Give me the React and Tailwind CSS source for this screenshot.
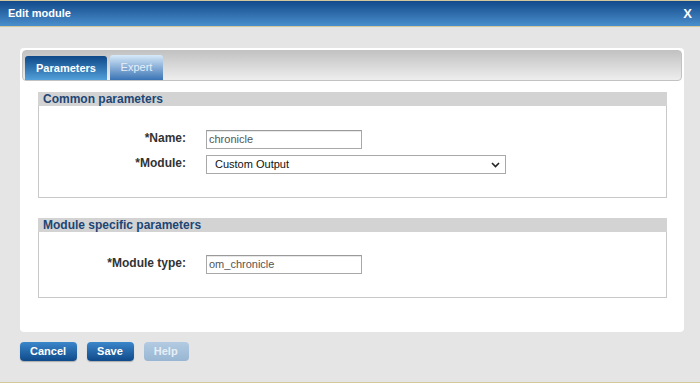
import React from "react";

function Field({ label, children }) {
  return (
    <div className="flex items-start">
      <div className="w-[147px] shrink-0 text-right text-[12px] leading-[14px] font-bold text-[#333333] pt-[1px]">{label}</div>
      <div className="ml-[20px]">{children}</div>
    </div>
  );
}

function TextBox({ value, width }) {
  return (
    <div
      className="h-[19px] border border-[#a8a8a8] border-t-[#9a9a9a] bg-white pl-[2px] text-[11px] leading-[17px] text-[#555555] shadow-[inset_0_1px_0_#e8e8e8]"
      style={{ width }}
    >
      {value}
    </div>
  );
}

function Section({ title, children, pt, pb }) {
  return (
    <div className="mx-[18px] mr-[17px]">
      <div className="h-[14px] bg-[#d3d3d3] pl-[5px] text-[12px] leading-[14px] font-bold text-[#1d4675]">{title}</div>
      <div className={`border border-t-0 border-[#c8c8c8] bg-white ${pt} ${pb}`}>{children}</div>
    </div>
  );
}

function Btn({ children, disabled }) {
  return (
    <div
      className={
        "h-[19px] rounded-[4px] pl-[10px] pr-[11px] text-[11px] leading-[19px] font-bold " +
        (disabled
          ? "bg-gradient-to-b from-[#b3cbe2] to-[#98b6d3] text-[#e6eef6]"
          : "bg-gradient-to-b from-[#3b87cb] to-[#0f4a8a] text-white shadow-[0_1px_1px_rgba(0,0,0,0.25)]")
      }
    >
      {children}
    </div>
  );
}

export default function App() {
  return (
    <div
      className="w-[700px] h-[383px] flex flex-col bg-[#e5e5e5] overflow-hidden"
      style={{ fontFamily: '"Liberation Sans", Arial, sans-serif' }}
    >
      <div className="h-[27px] shrink-0 border-t border-b border-[#d2c89c] bg-gradient-to-b from-[#134a8b] to-[#4a8fcd] flex items-center justify-between pl-[8px] pr-[8px]">
        <span className="text-[11px] font-bold text-white">Edit module</span>
        <span className="text-[13px] font-bold text-white leading-none">X</span>
      </div>
      <div className="flex-1 flex flex-col px-[20px] pr-[16px] border-b border-[#d2c89c]">
        <div className="mt-[21px] h-[284px] rounded-[4px] bg-white pt-[2px] px-[2px] flex flex-col">
          <div className="h-[31px] rounded-[4px] border border-[#c2c2c2] bg-gradient-to-b from-[#c2c2c2] to-[#eeeeee] flex items-end pl-[2px] gap-[3px]">
            <div className="h-[24px] w-[82px] rounded-t-[3px] bg-gradient-to-b from-[#0d4888] to-[#52a0db] text-[11px] font-bold text-white leading-[24px] text-center">
              Parameters
            </div>
            <div className="h-[25px] w-[53px] rounded-t-[3px] bg-gradient-to-b from-[#d8eaf9] to-[#3a74b4] text-[11px] text-[#e5eef8] leading-[25px] text-center">
              Expert
            </div>
          </div>
          <div className="mt-[11px] -mx-[2px]">
            <Section title="Common parameters" pt="pt-[24px]" pb="pb-[23px]">
              <div className="flex flex-col gap-[6px]">
                <Field label="*Name:">
                  <TextBox value="chronicle" width={156} />
                </Field>
                <Field label="*Module:">
                  <div className="relative h-[19px] w-[300px] border border-[#a8a8a8] bg-white pl-[8px] text-[11px] leading-[17px] text-[#111111]">
                    Custom Output
                    <svg className="absolute right-[5px] top-[6px]" width="9" height="6" viewBox="0 0 9 6">
                      <path d="M1 1 L4.5 4.5 L8 1" fill="none" stroke="#222" strokeWidth="1.6" />
                    </svg>
                  </div>
                </Field>
              </div>
            </Section>
            <div className="h-[20px]" />
            <Section title="Module specific parameters" pt="pt-[23px]" pb="pb-[23px]">
              <Field label="*Module type:">
                <TextBox value="om_chronicle" width={156} />
              </Field>
            </Section>
          </div>
        </div>
        <div className="mt-[10px] flex gap-[10px]">
          <Btn>Cancel</Btn>
          <Btn>Save</Btn>
          <Btn disabled>Help</Btn>
        </div>
      </div>
    </div>
  );
}
